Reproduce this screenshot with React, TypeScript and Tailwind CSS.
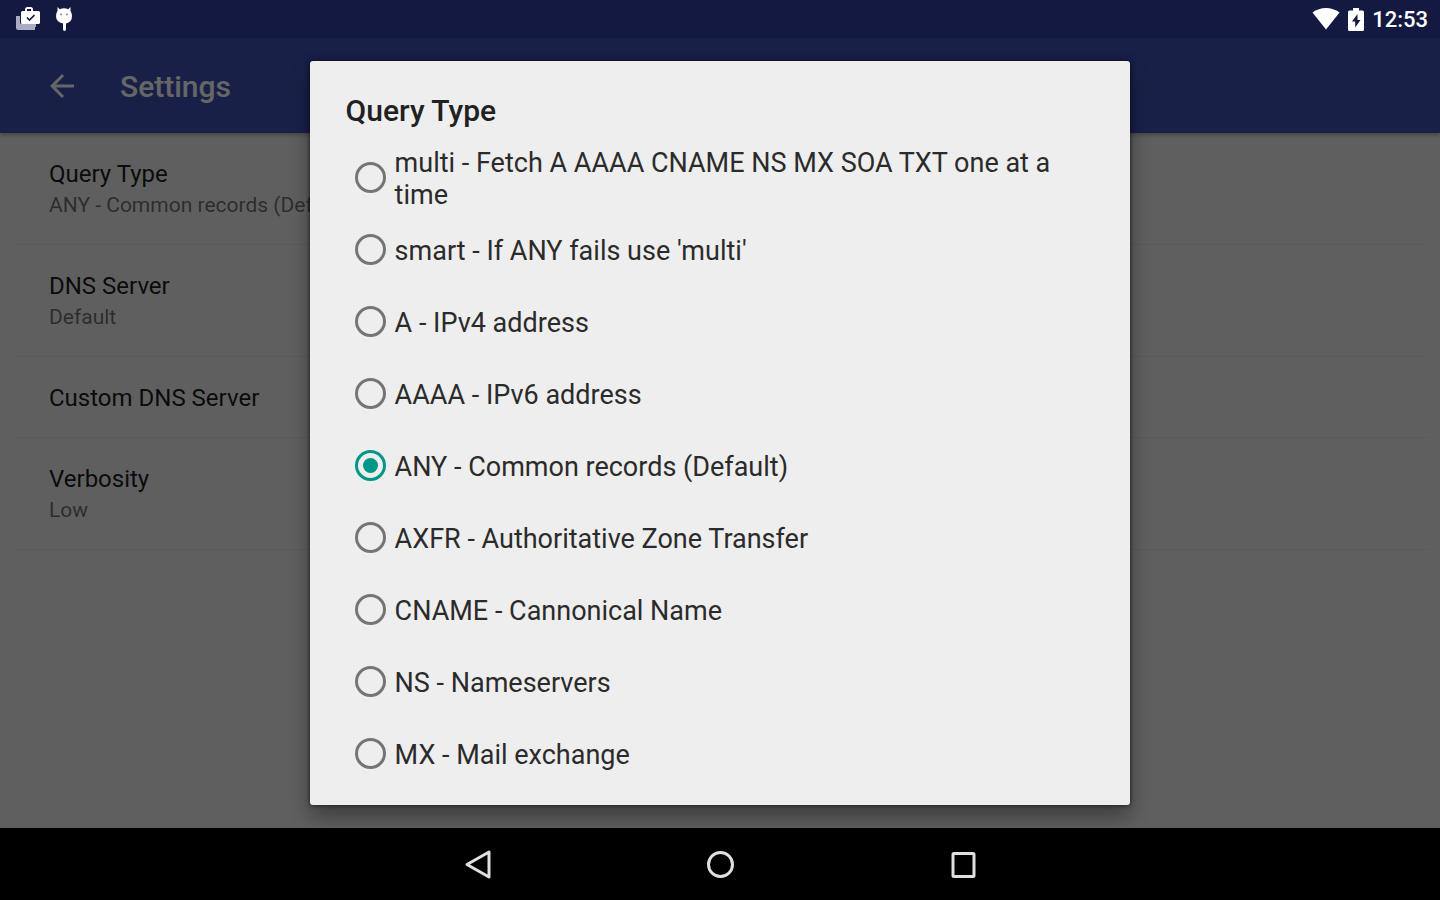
import { useState } from "react";

type Preference = {
  title: string;
  summary?: string;
};

const QUERY_TYPES = [
  { value: "multi", label: "multi - Fetch A AAAA CNAME NS MX SOA TXT one at a time" },
  { value: "smart", label: "smart - If ANY fails use 'multi'" },
  { value: "A", label: "A - IPv4 address" },
  { value: "AAAA", label: "AAAA - IPv6 address" },
  { value: "ANY", label: "ANY - Common records (Default)" },
  { value: "AXFR", label: "AXFR - Authoritative Zone Transfer" },
  { value: "CNAME", label: "CNAME - Cannonical Name" },
  { value: "NS", label: "NS - Nameservers" },
  { value: "MX", label: "MX - Mail exchange" }
];

const PREFERENCES: Preference[] = [
  { title: "Query Type", summary: "ANY - Common records (Default)" },
  { title: "DNS Server", summary: "Default" },
  { title: "Custom DNS Server" },
  { title: "Verbosity", summary: "Low" }
];

function StatusBar() {
  return (
    <div className="flex h-[38px] items-center justify-between bg-[#131940] pl-4 pr-3 text-white">
      <div className="flex items-center gap-4">
        {/* Work bag with a second one stacked behind it */}
        <svg width="24" height="24" viewBox="0 0 24 24" aria-hidden="true">
          <path d="M0 9h4v10h15v4H2a2 2 0 0 1-2-2z" fill="#a9acc2" />
          <path d="M4 16.500h16V20H4z" fill="#a9acc2" />
          <path
            d="M9 4V2.500Q9 0 11.500 0h3Q17 0 17 2.500V4h5.500Q24 4 24 5.500v10q0 1.500-1.500 1.500h-16Q5 17 5 15.500v-10Q5 4 6.500 4zm2 0h4V2h-4z"
            fill="#fff"
            fillRule="evenodd"
          />
          <path d="M11 10.500l2.500 2.500 5-5" fill="none" stroke="#131940" strokeWidth="1.600" />
        </svg>
        <svg width="16" height="24" viewBox="0 0 16 24" aria-hidden="true">
          <path
            d="M1.500 0l2.200 2.200Q8 .4 12.300 2.200L14.500 0v4Q16 6 16 9q0 6-6 7.500V22q0 2-1.500 2T7 22v-5.500Q0 15 0 9q0-3 1.500-5z"
            fill="#fff"
          />
          <circle cx="5" cy="7.500" r="1" fill="#8487a3" />
          <circle cx="11" cy="7.500" r="1" fill="#8487a3" />
        </svg>
      </div>
      <div className="flex items-center gap-2">
        <svg width="28" height="22" viewBox="0 0 28 22" aria-hidden="true">
          <path d="M14 21.500L.5 4.500Q6.500 0 14 0t13.500 4.500z" fill="#fff" />
        </svg>
        <svg width="16" height="23" viewBox="0 0 16 23" aria-hidden="true">
          <path
            d="M5 0h6v2.500h3.500Q16 2.500 16 4v17.500q0 1.500-1.500 1.500h-13Q0 23 0 21.500V4q0-1.500 1.500-1.500H5zm4.500 6L4 13.500h3.200V19.500L12.500 12H9.500z"
            fill="#fff"
            fillRule="evenodd"
          />
        </svg>
        <span className="pt-0.5 text-[22px] font-medium leading-none">12:53</span>
      </div>
    </div>
  );
}

function Toolbar() {
  return (
    <header className="flex h-[95px] items-center gap-10 bg-[#3f51b5] pl-11 text-white shadow-[0_2px_4px_rgba(0,0,0,0.3)]">
      <button type="button" aria-label="Navigate up">
        <svg width="36" height="36" viewBox="0 0 24 24" fill="currentColor">
          <path d="M20 11H7.830l5.590-5.590L12 4l-8 8 8 8 1.410-1.410L7.830 13H20v-2z" />
        </svg>
      </button>
      <h1 className="pt-0.5 text-[30px] font-medium leading-9">Settings</h1>
    </header>
  );
}

function QueryTypeDialog() {
  const [selected, setSelected] = useState("ANY");

  return (
    <div
      role="dialog"
      aria-modal="true"
      aria-labelledby="query-type-title"
      className="w-[57%] rounded-[3px] bg-[#eee] pb-4 pt-8 shadow-[0_0_4px_rgba(0,0,0,0.7),0_12px_20px_rgba(0,0,0,0.35)]"
    >
      <h2 id="query-type-title" className="pb-3 pl-9 text-[30px] font-medium leading-9 text-[#212121]">
        Query Type
      </h2>
      {QUERY_TYPES.map((type) => (
        <label
          key={type.value}
          className="flex min-h-[72px] items-center gap-[9px] pl-[45px] pr-9 text-[27px] leading-8 text-[#2b2b2b]"
        >
          <input
            type="radio"
            name="query-type"
            value={type.value}
            checked={selected === type.value}
            onChange={() => setSelected(type.value)}
            className="flex size-[31px] shrink-0 appearance-none items-center justify-center rounded-full border-3 border-[#757575] before:size-[15px] before:rounded-full checked:border-[#009688] checked:before:bg-[#009688]"
          />
          <span className="pt-1">{type.label}</span>
        </label>
      ))}
    </div>
  );
}

function NavigationBar() {
  return (
    <nav className="flex h-[72px] items-center justify-center bg-black text-[#e0e0e0]">
      <button type="button" aria-label="Back" className="flex w-[243px] justify-center">
        <svg width="32" height="32" viewBox="0 0 32 32" fill="none" stroke="currentColor" strokeWidth="3">
          <path d="M28 4v25L6 16.500z" strokeLinejoin="round" />
        </svg>
      </button>
      <button type="button" aria-label="Home" className="flex w-[243px] justify-center">
        <svg width="32" height="32" viewBox="0 0 32 32" fill="none" stroke="currentColor" strokeWidth="3">
          <circle cx="16.500" cy="16.500" r="12" />
        </svg>
      </button>
      <button type="button" aria-label="Recent apps" className="flex w-[243px] justify-center">
        <svg width="32" height="32" viewBox="0 0 32 32" fill="none" stroke="currentColor" strokeWidth="3">
          <rect x="6" y="5.500" width="21" height="23" rx="1" />
        </svg>
      </button>
    </nav>
  );
}

export default function App() {
  return (
    <div className="flex min-h-screen flex-col font-[Roboto,sans-serif]">
      <StatusBar />
      <main className="relative flex-1 overflow-hidden bg-[#eee]">
        <Toolbar />
        <ul className="pl-4 pr-3">
          {PREFERENCES.map((pref) => (
            <li key={pref.title} className="border-b border-black/6 pb-[23px] pl-[33px] pt-[26px]">
              <p className="text-2xl leading-[31px] text-black/90">{pref.title}</p>
              {pref.summary && <p className="text-[21px] leading-[31px] text-black/55">{pref.summary}</p>}
            </li>
          ))}
        </ul>
        {/* Scrim dims the settings screen but not the system bars */}
        <div className="absolute inset-0 flex items-center justify-center bg-black/60">
          <QueryTypeDialog />
        </div>
      </main>
      <NavigationBar />
    </div>
  );
}
